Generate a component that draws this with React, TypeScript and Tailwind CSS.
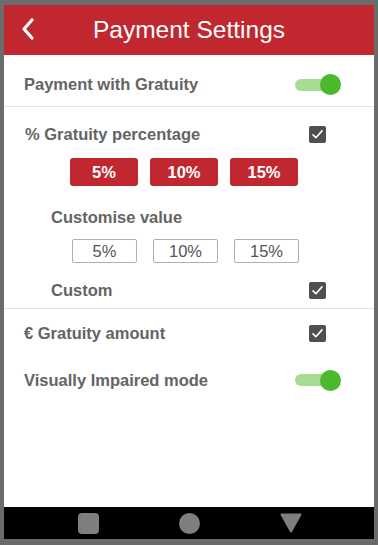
import React, { useState } from 'react';

const font = { fontFamily: '"Liberation Sans", Arial, sans-serif' };

const Toggle: React.FC<{ on: boolean; onChange: () => void }> = ({ on, onChange }) => (
  <button type="button" onClick={onChange} className="relative w-[46px] h-[21px] flex items-center">
    <span className={`block w-[44px] h-[12px] rounded-full ${on ? 'bg-[#a6dd92]' : 'bg-[#d4d4d4]'}`} />
    <span
      className={`absolute top-0 w-[21px] h-[21px] rounded-full ${on ? 'right-0 bg-[#4cb82d]' : 'left-0 bg-[#f0f0f0] shadow'}`}
    />
  </button>
);

const Check: React.FC<{ on: boolean; onChange: () => void }> = ({ on, onChange }) => (
  <button
    type="button"
    onClick={onChange}
    className={`w-[17px] h-[17px] rounded-[2px] flex items-center justify-center ${on ? 'bg-[#4f4f4f]' : 'border border-[#888] bg-white'}`}
  >
    {on && (
      <svg viewBox="0 0 16 16" className="w-[13px] h-[13px]">
        <path d="M2.5 8.5 L6 12 L13.5 3.5" fill="none" stroke="white" strokeWidth="2" strokeLinecap="round" strokeLinejoin="round" />
      </svg>
    )}
  </button>
);

const App: React.FC = () => {
  const [withGratuity, setWithGratuity] = useState(true);
  const [percentage, setPercentage] = useState(true);
  const [custom, setCustom] = useState(true);
  const [amount, setAmount] = useState(true);
  const [impaired, setImpaired] = useState(true);

  const presets = ['5%', '10%', '15%'];

  return (
    <div className="w-[378px] h-[545px] bg-[#6b6b6b] pt-[5px] pl-[4px] pr-[4px] pb-[6px]" style={font}>
      <div className="w-full h-full flex flex-col bg-white">
        {/* Header */}
        <div className="h-[50px] bg-[#c1272f] relative flex items-center justify-center text-white shrink-0">
          <button type="button" className="absolute left-[16px] top-[12px]">
            <svg viewBox="0 0 16 24" className="w-[16px] h-[24px]">
              <path d="M12 3 L4 12 L12 21" fill="none" stroke="white" strokeWidth="3.2" strokeLinecap="round" strokeLinejoin="round" />
            </svg>
          </button>
          <h1 className="text-[24.5px] leading-none">Payment Settings</h1>
        </div>

        {/* Content */}
        <div className="flex-1 text-[#646464] font-bold text-[16.5px]">
          <div className="h-[52px] pt-[8px] pl-[20px] pr-[33px] flex items-center justify-between border-b border-[#e3e3e3]">
            <span>Payment with Gratuity</span>
            <Toggle on={withGratuity} onChange={() => setWithGratuity(!withGratuity)} />
          </div>

          <div className="pt-[17px] pl-[21px] pr-[48px] flex items-center justify-between h-[37px]">
            <span>% Gratuity percentage</span>
            <Check on={percentage} onChange={() => setPercentage(!percentage)} />
          </div>

          <div className="mt-[14px] pl-[66px] flex gap-[12px]">
            {presets.map((p) => (
              <button
                key={p}
                type="button"
                className="w-[68px] h-[28px] rounded-[3px] bg-[#c1272f] text-white text-[16.5px] font-bold"
              >
                {p}
              </button>
            ))}
          </div>

          <div className="mt-[21px] pl-[47px] h-[20px] flex items-center">Customise value</div>

          <div className="mt-[12px] pl-[68px] flex gap-[16px]">
            {presets.map((p) => (
              <div
                key={p}
                className="w-[65px] h-[24px] border border-[#b0b0b0] rounded-[2px] flex items-center justify-center font-normal text-[16.5px] text-[#555]"
              >
                {p}
              </div>
            ))}
          </div>

          <div className="mt-[11px] pl-[47px] pr-[48px] h-[35px] flex items-center justify-between border-b border-[#e3e3e3] pb-[2px]">
            <span>Custom</span>
            <Check on={custom} onChange={() => setCustom(!custom)} />
          </div>

          <div className="mt-[14px] pl-[20px] pr-[48px] h-[20px] flex items-center justify-between">
            <span>€ Gratuity amount</span>
            <Check on={amount} onChange={() => setAmount(!amount)} />
          </div>

          <div className="mt-[26px] pl-[20px] pr-[33px] h-[22px] flex items-center justify-between">
            <span>Visually Impaired mode</span>
            <Toggle on={impaired} onChange={() => setImpaired(!impaired)} />
          </div>
        </div>

        {/* Android nav bar */}
        <div className="h-[32px] bg-black flex items-center pl-[74px] gap-[80px] shrink-0">
          <span className="w-[21px] h-[21px] rounded-[4px] bg-[#7f7f7f]" />
          <span className="w-[21px] h-[21px] rounded-full bg-[#7f7f7f]" />
          <svg viewBox="0 0 22 20" className="w-[22px] h-[20px]">
            <path d="M1.5 1.5 H20.5 L11 18.5 Z" fill="#7f7f7f" stroke="#7f7f7f" strokeWidth="2" strokeLinejoin="round" />
          </svg>
        </div>
      </div>
    </div>
  );
};

export default App;
